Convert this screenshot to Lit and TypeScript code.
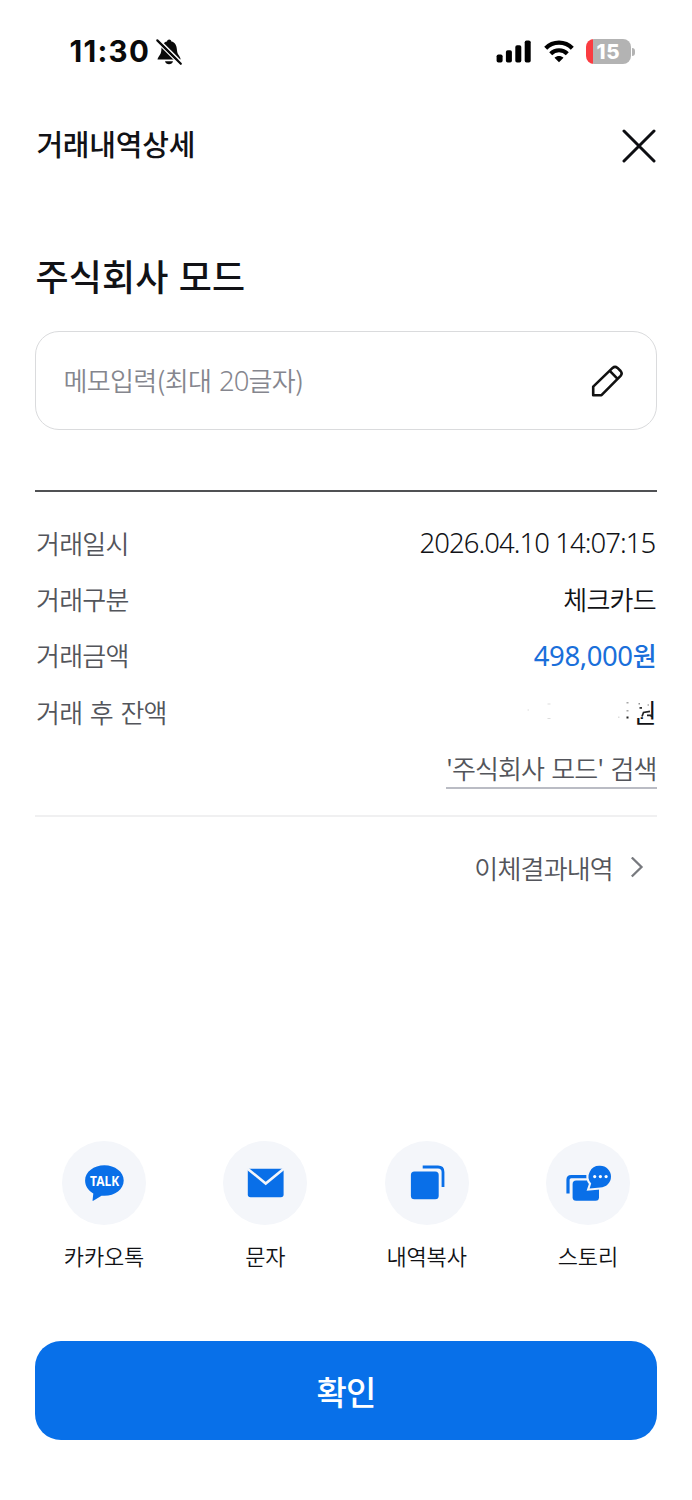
import { LitElement, html, css, svg } from "lit";
import { customElement } from "lit/decorators.js";

const bellOff = svg`<svg width="28" height="28" viewBox="0 0 28 28">
  <path d="M2.500 21.500 C3 18.500 6 17 6.300 12.500 C6.600 7 8.500 4.200 12 3.500 C12.200 0.800 16.200 0.800 16.400 3.500 C20 4.200 21.700 7 22 12.500 C22.300 17 25.600 18.500 25.600 21.500 Z" fill="#0a0a0a"/>
  <path d="M10 23.200 H18 C17.400 27.200 10.600 27.200 10 23.200 Z" fill="#0a0a0a"/>
  <path d="M3.600 1.200 L27.800 25.200" stroke="#fff" stroke-width="1.700"/>
  <path d="M1.300 3.500 L25 27.200" stroke="#fff" stroke-width="1.300"/>
  <path d="M2.300 2.400 L25.800 25.800" stroke="#0a0a0a" stroke-width="2.200" stroke-linecap="round"/>
</svg>`;

const signal = svg`<svg width="36" height="24" viewBox="0 0 36 24" fill="#000">
  <rect x="0.600" y="14.500" width="6" height="8" rx="1.800"/>
  <rect x="9.900" y="10.200" width="6" height="12.300" rx="1.800"/>
  <rect x="19.300" y="5.200" width="6" height="17.300" rx="1.800"/>
  <rect x="28.700" y="0.500" width="6" height="22" rx="1.800"/>
</svg>`;

const wifi = svg`<svg width="30" height="24" viewBox="0 0 30 24" fill="none" stroke="#000">
  <path d="M1.700 8.200 C9 0.800 21 0.800 28.300 8.200" stroke-width="4.200"/>
  <path d="M6.700 13.700 C11.300 9.100 18.700 9.100 23.300 13.700" stroke-width="4.200"/>
  <path d="M10.500 17.700 C13 15.300 17 15.300 19.500 17.700 L15 22.300 Z" fill="#000" stroke="none"/>
</svg>`;

const close = svg`<svg width="34" height="34" viewBox="0 0 34 34" fill="none" stroke="#0d0e12" stroke-width="3" stroke-linecap="round">
  <path d="M2 2 L32 32 M32 2 L2 32"/>
</svg>`;

const pencil = svg`<svg width="34" height="34" viewBox="0 0 34 34" fill="none" stroke="#111" stroke-width="2.600" stroke-linejoin="round">
  <path d="M3.200 31.200 V22.600 L22.600 3.900 Q25 1.800 27.500 3.900 L30.600 7 Q32.700 9.500 30.600 11.800 L11.500 31.200 Z"/>
  <path d="M19.800 6.800 L27.600 14.800"/>
</svg>`;

const chevron = svg`<svg width="14" height="22" viewBox="0 0 14 22" fill="none" stroke="#77797e" stroke-width="2.300">
  <path d="M1.800 0.500 L11.500 10 L1.800 19.500"/>
</svg>`;

const talk = svg`<svg width="84" height="84" viewBox="0 0 84 84">
  <path d="M42.400 24.300 C53 24.300 61.700 30.900 61.700 39.500 C61.700 48.200 53 54.800 42.400 54.800 L39.500 54.700 L31.300 59.800 C30.600 60.100 30.400 59.500 30.600 59 L31.300 52.500 C26.300 49.700 23.100 45 23.100 39.500 C23.100 30.900 31.800 24.300 42.400 24.300 Z" fill="#096fe8"/>
  <text x="42.600" y="44.700" text-anchor="middle" textLength="29" lengthAdjust="spacingAndGlyphs" class="talk-text">TALK</text>
</svg>`;

const mail = svg`<svg width="84" height="84" viewBox="0 0 84 84">
  <path d="M24.800 28.800 Q24.800 27.800 25.800 27.800 H59.600 Q60.600 27.800 60.600 28.800 V53.600 Q60.600 56.300 57.900 56.300 H27.500 Q24.800 56.300 24.800 53.600 Z" fill="#096fe8"/>
  <path d="M24.600 27.700 L42.700 42.500 L60.800 27.700" fill="none" stroke="#f4f6fa" stroke-width="2.600"/>
</svg>`;

const copy = svg`<svg width="84" height="84" viewBox="0 0 84 84">
  <rect x="25.900" y="30.600" width="27.800" height="27.600" rx="3.500" fill="#096fe8"/>
  <path d="M37.700 26 H53 Q58 26 58 31 V46" fill="none" stroke="#096fe8" stroke-width="2.800"/>
</svg>`;

const story = svg`<svg width="84" height="84" viewBox="0 0 84 84">
  <path d="M22 52.500 V38.800 Q22 35.600 25.200 35.600 H42" fill="none" stroke="#096fe8" stroke-width="3.200"/>
  <rect x="26.600" y="39.600" width="26.400" height="20.200" rx="3.500" fill="#096fe8"/>
  <path d="M54.200 24.800 A10.800 10.800 0 1 1 54.200 46.400 L43.600 47.400 L45.200 42.600 A10.800 10.800 0 0 1 54.200 24.800 Z" fill="#f4f6fa" stroke="#f4f6fa" stroke-width="4.200"/>
  <path d="M54.200 24.800 A10.800 10.800 0 1 1 54.200 46.400 L43.600 47.400 L45.200 42.600 A10.800 10.800 0 0 1 54.200 24.800 Z" fill="#096fe8"/>
  <g fill="#fff"><circle cx="48.700" cy="35.600" r="1.600"/><circle cx="54.400" cy="35.600" r="1.600"/><circle cx="60.100" cy="35.600" r="1.600"/></g>
</svg>`;

const actions = [
  { label: "카카오톡", icon: talk },
  { label: "문자", icon: mail },
  { label: "내역복사", icon: copy },
  { label: "스토리", icon: story },
];

@customElement("app-root")
export class AppRoot extends LitElement {
  static styles = css`
    :host {
      display: block;
      width: 692px;
      height: 1500px;
      background: #fff;
      color: #111216;
      font-family: "Noto Sans CJK KR", sans-serif;
      overflow: hidden;
    }
    * { box-sizing: border-box; }
    svg { display: block; flex: none; }
    .screen { display: flex; flex-direction: column; height: 1500px; padding: 0 35.500px 0 35.400px; white-space: nowrap; }
    .status { display: flex; align-items: center; height: 103px; padding: 0 21.500px 0 34px; }
    .clock { font: 700 29.500px/1 Inter, sans-serif; letter-spacing: 1.300px; color: #0a0a0a; margin-right: 5px; }
    .spacer { flex: 1; }
    .signal { margin-right: 12px; }
    .battery { display: flex; align-items: center; margin-left: 12px; }
    .cell { width: 45px; height: 25px; border-radius: 8px; background: linear-gradient(90deg, #fa3c41 7px, #b3b3b3 7px); color: #fff; font: 800 20.500px/25px Inter, sans-serif; letter-spacing: 0.800px; text-align: center; }
    .nub { width: 3px; height: 8px; margin-left: 1px; border-radius: 0 3px 3px 0; background: #b3b3b3; }
    header { display: flex; align-items: center; justify-content: space-between; height: 86px; padding-right: 1px; }
    h1 { margin: 0 0 7px 1px; font-size: 29px; font-weight: 500; line-height: 40px; letter-spacing: -0.200px; }
    h2 { margin: 60px 0 0; font-size: 36px; font-weight: 500; line-height: 52px; letter-spacing: 0.150px; word-spacing: 2px; }
    .memo { display: flex; align-items: center; justify-content: space-between; height: 99px; margin-top: 30px; padding: 0 32px 0 27px; border: 1.500px solid #dadbdd; border-radius: 24px; color: #85868e; }
    .memo .text { margin-bottom: 2px; letter-spacing: -0.600px; }
    .text { font-size: 26px; font-weight: 350; line-height: 36px; letter-spacing: -0.800px; word-spacing: 2.500px; }
    .latin { font-family: "Noto Sans", sans-serif; font-size: 27.500px; font-weight: 330; letter-spacing: -0.950px; word-spacing: 0; line-height: 1; }
    .details { margin: 60px 0 0; padding-top: 22.600px; border-top: 2px solid #505154; height: 327px; border-bottom: 2px solid #f0f0f1; }
    .row { display: flex; align-items: center; justify-content: space-between; height: 56.300px; padding-right: 0.700px; }
    .row > .latin { padding-right: 0.500px; }
    .label { color: #53555b; margin-left: 0.700px; }
    .amount { color: #1a6fda; font-weight: 500; }
    .amount .latin { font-weight: 450; letter-spacing: -0.400px; }
    .search { margin: 4px -0.700px 0 auto; color: #53555b; border-bottom: 2px solid #babcc4; height: 39px; letter-spacing: -0.950px; }
    .masked { position: relative; font-weight: 400; }
    .mask { position: absolute; right: 0; top: 0; }
    .link { display: flex; align-items: center; justify-content: flex-end; height: 102px; padding-right: 12.500px; gap: 17px; color: #53555b; }
    .actions { display: grid; grid-template-columns: repeat(4, 1fr); margin: 222px -12px 0; }
    .action { display: flex; flex-direction: column; align-items: center; }
    .disc { width: 84px; height: 84px; border-radius: 50%; background: #f4f6fa; }
    .caption { margin-top: 14px; font-size: 22px; font-weight: 350; line-height: 32px; letter-spacing: -0.150px; }
    .talk-text { font: 700 13.500px "Noto Sans", sans-serif; fill: #fff; }
    .confirm { margin: 70px 0 0; border: 0; padding: 0; height: 99px; border-radius: 26px; background: #0870e9; color: #fff; font: 500 33px/98px "Noto Sans CJK KR", sans-serif; letter-spacing: -1px; text-align: center; }
  `;

  render() {
    return html`<div class="screen">
      <div class="status">
        <span class="clock">11:30</span>${bellOff}<span class="spacer"></span>
        <span class="signal">${signal}</span>${wifi}
        <span class="battery"><span class="cell">15</span><span class="nub"></span></span>
      </div>
      <header><h1>거래내역상세</h1>${close}</header>
      <h2>주식회사 모드</h2>
      <div class="memo"><span class="text">메모입력(최대 <span class="latin">20</span>글자)</span>${pencil}</div>
      <section class="details">
        <div class="row text"><span class="label">거래일시</span><span class="latin">2026.04.10 14:07:15</span></div>
        <div class="row text"><span class="label">거래구분</span><span>체크카드</span></div>
        <div class="row text"><span class="label">거래금액</span><span class="amount"><span class="latin">498,000</span>원</span></div>
        <div class="row text"><span class="label">거래 후 잔액</span><span class="masked">원
          <svg class="mask" width="132" height="36" viewBox="0 0 132 36">
            <path d="M100 0 H126.500 V23.200 H100 Z" fill="#fff"/>
            <path d="M118 22.500 L119.500 18.500 L126 17.300 M123 21.300 H129" fill="none" stroke="#222" stroke-width="1.700"/>
            <rect x="115.500" y="13" width="2.500" height="1.800" fill="#333"/>
            <g fill="#222"><rect x="102.500" y="22.500" width="2" height="2"/><rect x="102.500" y="16" width="2" height="1.500" opacity=".4"/><rect x="102.500" y="8" width="2" height="1.500" opacity=".4"/><rect x="114.500" y="9" width="1.500" height="1.500" opacity=".5"/><rect x="123.500" y="10" width="1.500" height="2" opacity=".3"/></g>
            <g fill="#ddd"><rect x="23.500" y="9.500" width="3" height="1"/><rect x="23.500" y="24" width="3" height="1"/><rect x="3.500" y="15.500" width="1.500" height="1"/><rect x="94" y="22.500" width="1.500" height="1.500"/></g>
          </svg></span></div>
        <div class="row text"><span class="search">'주식회사 모드' 검색</span></div>
      </section>
      <div class="link text"><span>이체결과내역</span>${chevron}</div>
      <nav class="actions">
        ${actions.map((a) => html`<div class="action"><span class="disc">${a.icon}</span><span class="caption">${a.label}</span></div>`)}
      </nav>
      <button class="confirm">확인</button>
    </div>`;
  }
}
